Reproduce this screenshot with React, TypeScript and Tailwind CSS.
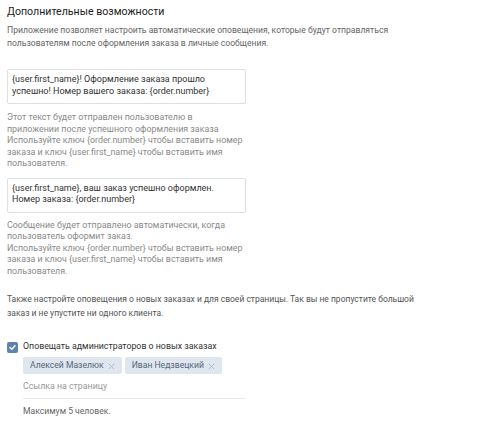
import React from "react";

function Tag({ name }: { name: string }) {
  return (
    <div className="flex items-center h-[17px] pl-[7px] pr-[7px] bg-[#dfe6ee] text-[#55677d] text-[8.6px] leading-none rounded-[2px] gap-[4px] whitespace-nowrap">
      <span>{name}</span>
      <svg width="7" height="7" viewBox="0 0 7 7" className="mt-[1px]">
        <path d="M0.8 0.8 L6.2 6.2 M6.2 0.8 L0.8 6.2" stroke="#b0bccb" strokeWidth="1" />
      </svg>
    </div>
  );
}

export default function App() {
  return (
    <div className="w-[485px] h-[424px] bg-white overflow-hidden px-[7px] pt-[4px] font-[Roboto,'Noto_Sans',sans-serif] whitespace-nowrap">
      <div className="text-[10.6px] leading-[16px] text-[#222]">Дополнительные возможности</div>
      <div className="mt-[4px] text-[8.6px] leading-[12.5px] text-[#656565]">
        Приложение позволяет настроить автоматические оповещения, которые будут отправляться
        <br />
        пользователям после оформления заказа в личные сообщения.
      </div>
      <div className="mt-[20px] w-[239px] h-[35px] border border-[#dcdfe3] rounded-[2px] pl-[4px] pt-[4px] text-[9px] leading-[11.5px] text-[#333]">
        {"{user.first_name}! Оформление заказа прошло"}
        <br />
        {"успешно! Номер вашего заказа: {order.number}"}
      </div>
      <div className="mt-[8px] text-[8.9px] leading-[11.5px] text-[#8a8a8a]">
        Этот текст будет отправлен пользователю в
        <br />
        приложении после успешного оформления заказа
        <br />
        {"Используйте ключ {order.number} чтобы вставить номер"}
        <br />
        {"заказа и ключ {user.first_name} чтобы вставить имя"}
        <br />
        пользователя.
      </div>
      <div className="mt-[8px] w-[239px] h-[35px] border border-[#dcdfe3] rounded-[2px] pl-[4px] pt-[4px] text-[9px] leading-[11.5px] text-[#333]">
        {"{user.first_name}, ваш заказ успешно оформлен."}
        <br />
        {"Номер заказа: {order.number}"}
      </div>
      <div className="mt-[7px] text-[8.9px] leading-[11.5px] text-[#8a8a8a]">
        Сообщение будет отправлено автоматически, когда
        <br />
        пользователь оформит заказ.
        <br />
        {"Используйте ключ {order.number} чтобы вставить номер"}
        <br />
        {"заказа и ключ {user.first_name} чтобы вставить имя"}
        <br />
        пользователя.
      </div>
      <div className="mt-[16px] text-[8.5px] leading-[13.5px] text-[#555]">
        Также настройте оповещения о новых заказах и для своей страницы. Так вы не пропустите большой
        <br />
        заказ и не упустите ни одного клиента.
      </div>
      <div className="mt-[21px] flex items-center h-[12px] gap-[5px]">
        <div className="w-[11px] h-[11px] rounded-[2px] bg-[#5f83ad] flex items-center justify-center">
          <svg width="9" height="9" viewBox="0 0 9 9">
            <path d="M2 4.6 L3.8 6.3 L7 2.8" stroke="white" strokeWidth="1.4" fill="none" strokeLinecap="round" strokeLinejoin="round" />
          </svg>
        </div>
        <span className="text-[8.8px] text-[#333]">Оповещать администраторов о новых заказах</span>
      </div>
      <div className="ml-[16px] mt-[4px] flex gap-[3px]">
        <Tag name="Алексей Мазелюк" />
        <Tag name="Иван Недзвецкий" />
      </div>
      <div className="ml-[16px] w-[223px] mt-[6px] pb-[6px] border-b border-[#e7e8ec] text-[8.8px] leading-[12px] text-[#999]">
        Ссылка на страницу
      </div>
      <div className="ml-[16px] mt-[6px] text-[8.6px] leading-[12px] text-[#666]">Максимум 5 человек.</div>
    </div>
  );
}
